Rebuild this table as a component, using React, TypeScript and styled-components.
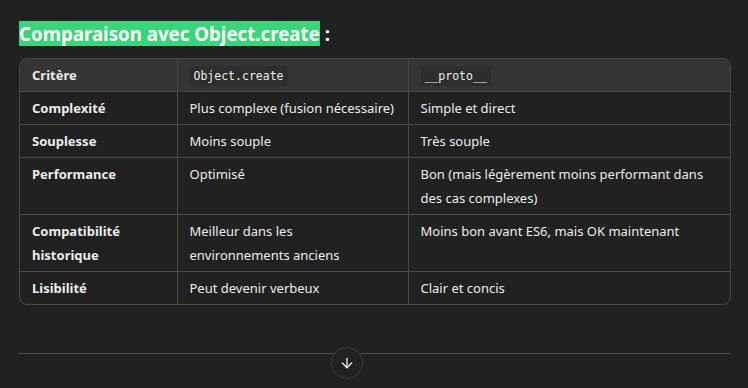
import React from "react";
import styled, { createGlobalStyle } from "styled-components";

const Global = createGlobalStyle`
  html, body { margin: 0; padding: 0; background: #212121; }
  body { font-family: "Noto Sans", "Open Sans", sans-serif; color: #ececec; }
`;

const Page = styled.div`
  width: 748px;
  height: 388px;
  box-sizing: border-box;
  padding: 20px 17px 0 19px;
  display: flex;
  flex-direction: column;
  overflow: hidden;
`;

const Heading = styled.h3`
  margin: 0 0 11px 0;
  font-size: 18.7px;
  line-height: 27px;
  font-weight: 700;
  color: #ffffff;
`;

const Mark = styled.span`
  background: #3ad47a;
  color: #ffffff;
`;

const TableWrap = styled.div`
  border: 1px solid #484848;
  border-radius: 8px;
  overflow: hidden;
`;

const Table = styled.table`
  width: 100%;
  border-collapse: collapse;
  table-layout: fixed;
  font-size: 13px;
  line-height: 24px;
`;

const Cell = styled.td<{ $bold?: boolean; $last?: boolean }>`
  padding: 4px 12px;
  vertical-align: top;
  text-align: left;
  color: #ececec;
  font-weight: ${(p) => (p.$bold ? 700 : 400)};
  border-right: ${(p) => (p.$last ? "none" : "1px solid #484848")};
  border-bottom: 1px solid #484848;
`;

const HeadCell = styled(Cell).attrs({ as: "th" })`
  background: #353535;
  font-weight: 700;
`;

const Row = styled.tr<{ $final?: boolean }>`
  & > td {
    border-bottom: ${(p) => (p.$final ? "none" : "1px solid #484848")};
  }
`;

const Code = styled.code`
  font-family: "DejaVu Sans Mono", "Liberation Mono", monospace;
  font-size: 11.5px;
  line-height: 13px;
  font-weight: 400;
  background: #2d2d2d;
  border-radius: 4px;
  padding: 3px 4px;
  color: #ececec;
`;

const Footer = styled.div`
  margin-top: 48px;
  position: relative;
  border-top: 1px solid #4a4a4a;
`;

const ScrollButton = styled.button`
  position: absolute;
  top: -7px;
  left: 312px;
  width: 32px;
  height: 32px;
  border-radius: 50%;
  border: 1px solid #3d3d3d;
  background: #212121;
  display: flex;
  align-items: center;
  justify-content: center;
  padding: 0;
  color: #ececec;
`;

const rows: [string, string, string][] = [
  ["Complexité", "Plus complexe (fusion nécessaire)", "Simple et direct"],
  ["Souplesse", "Moins souple", "Très souple"],
  ["Performance", "Optimisé", "Bon (mais légèrement moins performant dans des cas complexes)"],
  ["Compatibilité historique", "Meilleur dans les environnements anciens", "Moins bon avant ES6, mais OK maintenant"],
  ["Lisibilité", "Peut devenir verbeux", "Clair et concis"],
];

export default function App() {
  return (
    <>
      <Global />
      <Page>
        <Heading>
          <Mark>Comparaison avec Object.create</Mark> :
        </Heading>
        <TableWrap>
          <Table>
            <colgroup>
              <col style={{ width: 157 }} />
              <col style={{ width: 231 }} />
              <col />
            </colgroup>
            <thead>
              <tr>
                <HeadCell>Critère</HeadCell>
                <HeadCell>
                  <Code>Object.create</Code>
                </HeadCell>
                <HeadCell $last>
                  <Code>__proto__</Code>
                </HeadCell>
              </tr>
            </thead>
            <tbody>
              {rows.map((r, i) => (
                <Row key={r[0]} $final={i === rows.length - 1}>
                  <Cell $bold>{r[0]}</Cell>
                  <Cell>{r[1]}</Cell>
                  <Cell $last>{r[2]}</Cell>
                </Row>
              ))}
            </tbody>
          </Table>
        </TableWrap>
        <Footer>
          <ScrollButton aria-label="scroll down">
            <svg width="16" height="16" viewBox="0 0 24 24" fill="none" stroke="currentColor" strokeWidth="2" strokeLinecap="round" strokeLinejoin="round">
              <path d="M12 5v14" />
              <path d="M19 12l-7 7-7-7" />
            </svg>
          </ScrollButton>
        </Footer>
      </Page>
    </>
  );
}
